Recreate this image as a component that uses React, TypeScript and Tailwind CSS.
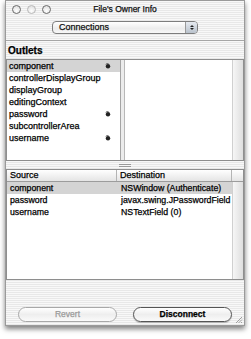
import React from 'react';

const stripes =
  'bg-[repeating-linear-gradient(to_bottom,#f8f8f8_0px,#f8f8f8_1px,#e8e8e8_1px,#e8e8e8_2px)]';

const outlets = [
  { name: 'component', linked: true, selected: true },
  { name: 'controllerDisplayGroup', linked: false },
  { name: 'displayGroup', linked: false },
  { name: 'editingContext', linked: false },
  { name: 'password', linked: true },
  { name: 'subcontrollerArea', linked: false },
  { name: 'username', linked: true },
];

const connections = [
  { source: 'component', dest: 'NSWindow (Authenticate)', selected: true },
  { source: 'password', dest: 'javax.swing.JPasswordField' },
  { source: 'username', dest: 'NSTextField (0)' },
];

function LinkDot() {
  return (
    <svg width="6" height="6" viewBox="0 0 6 6">
      <circle cx="3" cy="3.2" r="2.2" fill="#222" />
      <path d="M0.6 1.6 A2.8 2.8 0 0 1 3.6 0.4" stroke="#555" strokeWidth="0.8" fill="none" />
    </svg>
  );
}

function Light({ dim }: { dim?: boolean }) {
  return (
    <div
      className={`w-[9px] h-[9px] rounded-full border ${
        dim ? 'border-[#b8b8b8]' : 'border-[#6a6a6a]'
      } bg-[radial-gradient(circle_at_50%_70%,#ffffff,#d8d8d8)]`}
    />
  );
}

export default function App() {
  return (
    <div
      className="w-[251px] h-[339px] bg-white pl-[5px] text-black [-webkit-text-stroke:0.25px_currentColor]"
      style={{ fontFamily: '"Liberation Sans", Arial, sans-serif' }}
    >
      <div
        className={`relative w-[240px] h-[326px] flex flex-col border border-[#9a9a9a] shadow-[0_3px_5px_rgba(0,0,0,0.5)] ${stripes}`}
      >
        {/* Title bar */}
        <div className="relative h-[16px] flex items-center">
          <div className="flex items-center gap-[6px] pl-[6px]">
            <Light />
            <Light dim />
            <Light />
          </div>
          <div className="absolute inset-0 flex items-center justify-center text-[8.5px] text-[#111]">
            File's Owner Info
          </div>
        </div>

        {/* Popup */}
        <div className="flex justify-center mt-[4px]">
          <div className="w-[146px] h-[13px] flex rounded-[4px] border border-[#7d7d7d] bg-[linear-gradient(to_bottom,#ffffff,#ececec_60%,#f8f8f8)] overflow-hidden">
            <div className="flex-1 flex items-center pl-[6px] text-[9px] text-[#111]">Connections</div>
            <div className="w-[12px] flex flex-col items-center justify-center gap-[1px] border-l border-[#9a9a9a] bg-[linear-gradient(to_bottom,#e6eaf0,#b9c2cc)]">
              <div className="w-0 h-0 border-l-[2px] border-r-[2px] border-b-[2px] border-l-transparent border-r-transparent border-b-[#222]" />
              <div className="w-0 h-0 border-l-[2px] border-r-[2px] border-t-[2px] border-l-transparent border-r-transparent border-t-[#222]" />
            </div>
          </div>
        </div>

        {/* Separator */}
        <div className="mt-[6px] h-px bg-[#a6a6a6]" />

        <div className="h-[18px] flex items-center pl-[2px] text-[10px] font-bold">Outlets</div>

        {/* Browser */}
        <div className="h-[102px] flex border border-[#8e8e8e] bg-white">
          <div className="w-[114px] flex flex-col border-r border-[#a4a4a4]">
            {outlets.map((o) => (
              <div
                key={o.name}
                className={`h-[12px] flex items-center justify-between pl-[2px] pr-[9px] text-[9px] leading-[11px] ${
                  o.selected ? 'bg-[#d4d4d4]' : ''
                }`}
              >
                <span>{o.name}</span>
                {o.linked && <LinkDot />}
              </div>
            ))}
          </div>
          <div className="w-[3px] bg-[#ececec]" />
          <div className="flex-1 border-l border-[#b8b8b8]" />
          <div className="w-[11px] border-l border-[#d0d0d0] bg-[linear-gradient(to_right,#f6f6f6,#dedede)]" />
        </div>

        {/* Split view handle */}
        <div className="h-[8px] flex items-center justify-center">
          <div className="w-[12px] h-[3px] border-t border-b border-[#9a9a9a]" />
        </div>

        {/* Connections table */}
        <div className="h-[111px] flex flex-col border border-[#8e8e8e] bg-white">
          <div className="h-[12px] flex text-[9px] border-b border-[#9c9c9c] bg-[linear-gradient(to_bottom,#ffffff,#e4e4e4)]">
            <div className="w-[110px] flex items-center pl-[3px] border-r border-[#b4b4b4]">Source</div>
            <div className="w-[115px] flex items-center pl-[3px] border-r border-[#b4b4b4]">Destination</div>
            <div className="flex-1" />
          </div>
          <div className="flex-1 flex">
            <div className="flex-1 flex flex-col">
              {connections.map((c) => (
                <div
                  key={c.source}
                  className={`h-[12px] flex items-center text-[8.75px] leading-[11px] ${
                    c.selected ? 'bg-[#d4d4d4]' : ''
                  }`}
                >
                  <div className="w-[111px] shrink-0 pl-[3px]">{c.source}</div>
                  <div className="pl-[3px] whitespace-nowrap">{c.dest}</div>
                </div>
              ))}
            </div>
            <div className="w-[11px] border-l border-[#d0d0d0] bg-[linear-gradient(to_right,#f6f6f6,#dedede)]" />
          </div>
        </div>

        {/* Buttons */}
        <div className="flex gap-[16px] px-[12px] mt-[27px]">
          <div className="flex-1 h-[15px] flex items-center justify-center rounded-full border border-[#a8a8a8] bg-[linear-gradient(to_bottom,#ffffff,#eeeeee_50%,#fafafa)] text-[8.5px] text-[#9a9a9a]">
            Revert
          </div>
          <div className="flex-1 h-[15px] flex items-center justify-center rounded-full border border-[#555] bg-[linear-gradient(to_bottom,#ffffff,#eeeeee_50%,#fafafa)] text-[8.5px] font-bold text-black shadow-[0_1px_1px_rgba(0,0,0,0.25)]">
            Disconnect
          </div>
        </div>

        {/* Resize grip */}
        <svg className="absolute right-[1px] bottom-[1px]" width="9" height="9" viewBox="0 0 9 9">
          <path d="M8 2 L2 8 M8 4.5 L4.5 8 M8 7 L7 8" stroke="#8a8a8a" strokeWidth="0.8" />
        </svg>
      </div>
    </div>
  );
}
